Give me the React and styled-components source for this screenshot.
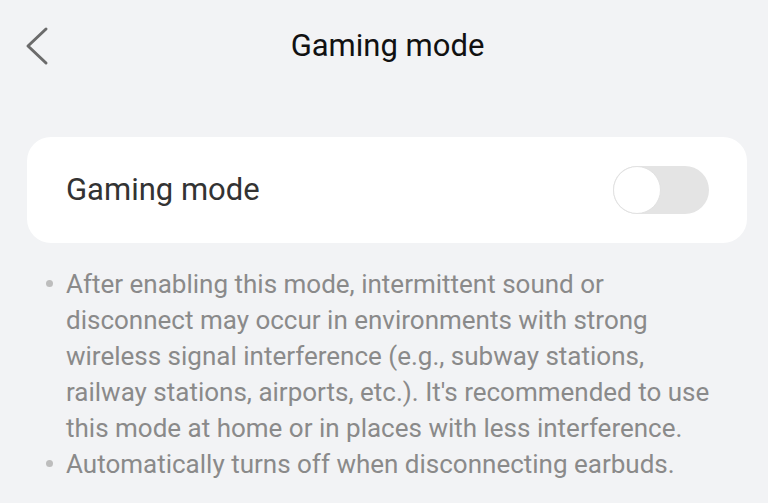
import styled, { createGlobalStyle } from "styled-components";

const GlobalStyle = createGlobalStyle`
    html, body {
        margin: 0;
        padding: 0;
        background: #f2f3f5;
    }
    body {
        font-family: Roboto, "Noto Sans", "Liberation Sans", sans-serif;
        -webkit-font-smoothing: antialiased;
    }
`;

export default function App() {
    return (
        <>
            <GlobalStyle />
            <Screen>
                <Header>
                    <BackButton aria-label="Back">
                        <svg width="30" height="44" viewBox="0 0 30 44" fill="none">
                            <path d="M22 5 L4 22 L22 39" stroke="#6b6b6b" strokeWidth="3" strokeLinecap="round" strokeLinejoin="round" />
                        </svg>
                    </BackButton>
                    <Title>Gaming mode</Title>
                    <span />
                </Header>

                <Card>
                    <CardLabel>Gaming mode</CardLabel>
                    <Switch role="switch" aria-checked="false">
                        <Thumb />
                    </Switch>
                </Card>

                <Notes>
                    <Note>
                        <Dot />
                        <NoteText>
                            After enabling this mode, intermittent sound or disconnect may occur in environments with strong wireless signal interference (e.g., subway stations, railway stations, airports, etc.). It's recommended to use this mode at home or in places with less interference.
                        </NoteText>
                    </Note>
                    <Note>
                        <Dot />
                        <NoteText>Automatically turns off when disconnecting earbuds.</NoteText>
                    </Note>
                </Notes>
            </Screen>
        </>
    );
}

const Screen = styled.div`
    width: 768px;
    height: 503px;
    overflow: hidden;
    display: flex;
    flex-direction: column;
`;

const Header = styled.header`
    height: 92px;
    display: grid;
    grid-template-columns: 1fr auto 1fr;
    align-items: center;
`;

const BackButton = styled.button`
    justify-self: start;
    margin-left: 24px;
    background: none;
    border: none;
    padding: 0;
    display: flex;
    cursor: pointer;
`;

const Title = styled.h1`
    margin: 0 0 0 7px;
    font-size: 31px;
    font-weight: 400;
    color: #111111;
    line-height: 36px;
`;

const Card = styled.div`
    margin: 45px 21px 0 27px;
    height: 106px;
    background: #ffffff;
    border-radius: 24px;
    display: flex;
    align-items: center;
    justify-content: space-between;
    padding: 0 38px 0 39px;
`;

const CardLabel = styled.span`
    font-size: 31px;
    color: #333333;
    line-height: 36px;
`;

const Switch = styled.div`
    width: 96px;
    height: 48px;
    border-radius: 24px;
    background: #e4e4e4;
    display: flex;
    align-items: center;
`;

const Thumb = styled.div`
    width: 48px;
    height: 48px;
    box-sizing: border-box;
    border-radius: 50%;
    background: #ffffff;
    border: 1.5px solid #e2e2e2;
`;

const Notes = styled.ul`
    list-style: none;
    margin: 23px 50px 0 46px;
    padding: 0;
`;

const Note = styled.li`
    display: flex;
    align-items: flex-start;
    gap: 13px;
`;

const Dot = styled.span`
    flex: none;
    width: 7px;
    height: 7px;
    border-radius: 50%;
    background: #bdbdbd;
    margin-top: 14px;
`;

const NoteText = styled.span`
    font-size: 26px;
    line-height: 36px;
    color: #8a8a8a;
`;
